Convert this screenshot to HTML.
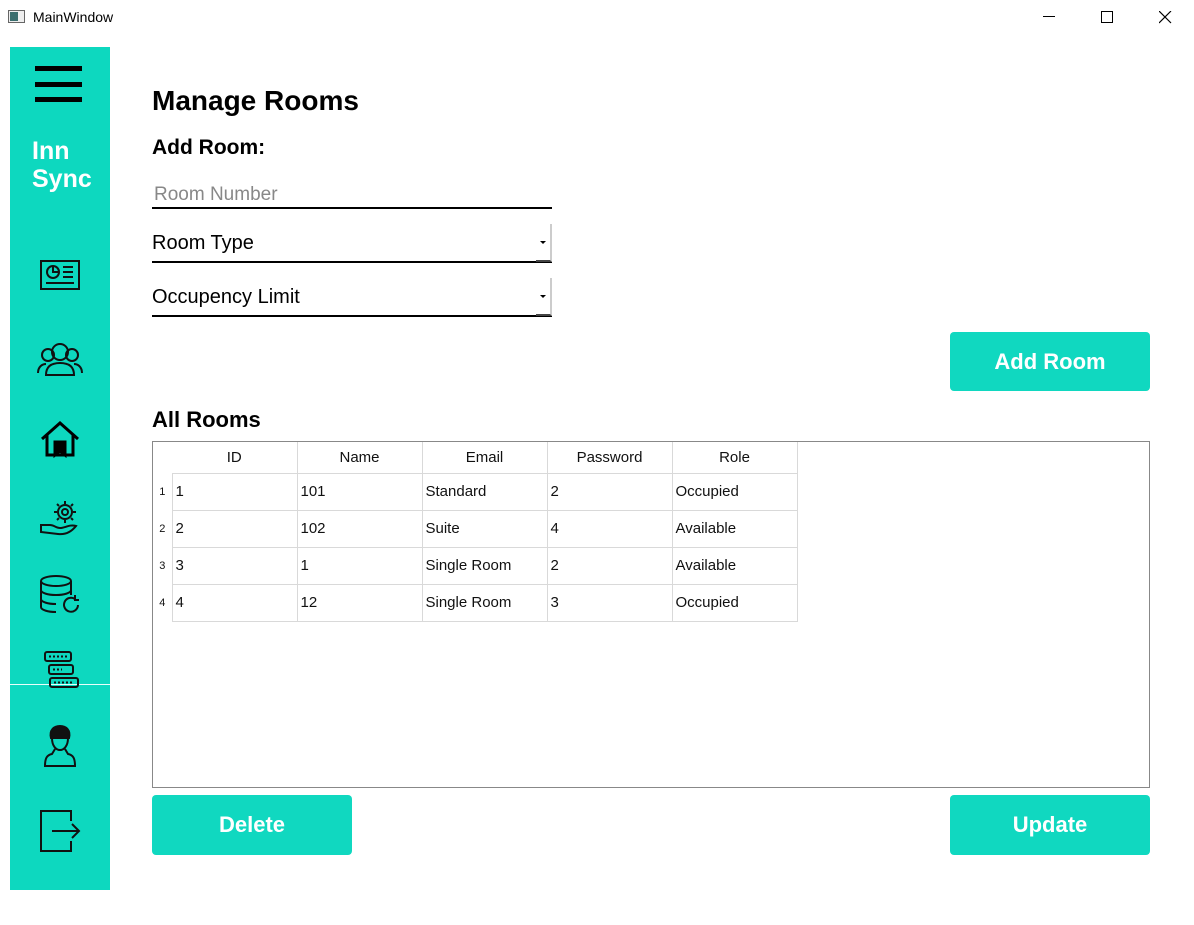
<!DOCTYPE html>
<html><head><meta charset="utf-8">
<style>
*{margin:0;padding:0;box-sizing:border-box}
body{width:1194px;height:925px;background:#fff;position:relative;overflow:hidden;font-family:"Liberation Sans",sans-serif}
.abs{position:absolute}
.side{left:10px;top:47px;width:100px;height:843px;background:#0dd8bf}
.btn{position:absolute;background:#10d8c0;border-radius:4px;color:#fff;font-weight:bold;font-size:22px;text-align:center}
.line{position:absolute;height:2px;background:#000}
table{border-collapse:collapse;table-layout:fixed;font-family:"Liberation Sans",sans-serif;color:#111}
td{border:1px solid #d9d9d9;height:37px;width:125px;padding-left:3px;font-size:15px;overflow:hidden;white-space:nowrap}
th{font-weight:normal;height:31px;width:125px;border-right:1px solid #d9d9d9;font-size:15px}
td.rh,th.rh{width:19px;border:none;font-size:11px;padding:0;text-align:center}
</style></head><body>
<svg class="abs" style="left:8px;top:10px" width="18" height="14"><rect x="0.5" y="0.5" width="16" height="12" fill="#eee" stroke="#666"/><rect x="2" y="2" width="8" height="9" fill="#3b6e6e"/></svg>
<div class="abs" style="left:33px;top:9px;font-size:14px;color:#000">MainWindow</div>
<div class="abs" style="left:1043px;top:16px;width:12px;height:1px;background:#000"></div>
<div class="abs" style="left:1101px;top:11px;width:12px;height:12px;border:1px solid #000"></div>
<svg class="abs" style="left:1159px;top:11px" width="13" height="13"><path d="M0 0L12 12M12 0L0 12" stroke="#000" stroke-width="1.2"/></svg>

<div class="abs side"></div>
<div class="abs" style="left:10px;top:684px;width:100px;height:1px;background:#e8fffb"></div>
<div class="abs" style="left:35px;top:66px;width:47px;height:5px;background:#000"></div>
<div class="abs" style="left:35px;top:82px;width:47px;height:5px;background:#000"></div>
<div class="abs" style="left:35px;top:97px;width:47px;height:5px;background:#000"></div>
<div class="abs" style="left:32px;top:137px;color:#fff;font-weight:bold;font-size:25px;line-height:28px;font-family:'Liberation Sans',sans-serif">Inn<br>Sync</div>
<svg class="abs" style="left:38px;top:258px" width="44" height="36" fill="none" stroke="#111" stroke-width="2"><rect x="3" y="3" width="38" height="28"/><circle cx="15" cy="14" r="6"/><path d="M15 8V14H21M25 9H35M25 14H35M25 19H35M8 25H36"/></svg>
<svg class="abs" style="left:36px;top:337px" width="48" height="40" fill="none" stroke="#111" stroke-width="2"><circle cx="24" cy="15" r="8"/><circle cx="12" cy="18" r="6"/><circle cx="36" cy="18" r="6"/><path d="M10 38C10 29 16 26 24 26S38 29 38 38ZM2 36C2 30 6 27 10 27M46 36C46 30 42 27 38 27"/></svg>
<svg class="abs" style="left:40px;top:420px" width="40" height="38" fill="none" stroke="#000" stroke-width="3"><path d="M2 19L20 3L38 19M7 15V35H33V15"/><path d="M15 22H25V35L20 31L15 35Z" fill="#000"/></svg>
<svg class="abs" style="left:38px;top:498px" width="42" height="40" fill="none" stroke="#111" stroke-width="2"><circle cx="27" cy="14" r="7"/><circle cx="27" cy="14" r="3"/><path d="M27 3V6M27 22V25M16 14H19M35 14H38M19 6L21 8M33 20L35 22M35 6L33 8M21 20L19 22"/><path d="M3 27H12C16 27 18 30 22 30C27 30 32 26 38 28C34 33 28 37 20 36L3 34Z"/></svg>
<svg class="abs" style="left:38px;top:573px" width="44" height="42" fill="none" stroke="#111" stroke-width="2"><ellipse cx="18" cy="8" rx="15" ry="5"/><path d="M3 8V34C3 37 10 39 18 39M33 8V22M3 17C3 20 10 22 18 22S33 20 33 17M3 26C3 29 10 31 18 31"/><path d="M40 32A7 7 0 1 1 37 26M37 22V27H41"/></svg>
<svg class="abs" style="left:40px;top:650px" width="40" height="40" fill="none" stroke="#111" stroke-width="2"><rect x="5" y="2" width="26" height="9" rx="2"/><rect x="9" y="15" width="24" height="9" rx="2"/><rect x="10" y="28" width="28" height="9" rx="2"/><path d="M9 6.5H27M13 19.5H22M14 32.5H33" stroke-dasharray="2 2"/></svg>
<svg class="abs" style="left:42px;top:724px" width="36" height="44" fill="none" stroke="#111" stroke-width="2"><path d="M9 14C7 6 12 2 18 2S29 6 27 14Z" fill="#111"/><path d="M10 14C10 22 14 26 18 26S26 22 26 14M13 25L10 30C5 31 3 34 3 42H33C33 34 31 31 26 30L23 25"/></svg>
<svg class="abs" style="left:38px;top:808px" width="44" height="46" fill="none" stroke="#111" stroke-width="2"><path d="M33 13V3H3V43H33V33M14 23H41M34 16L41 23L34 30"/></svg>

<div class="abs" style="left:152px;top:85px;font-size:28px;font-weight:bold">Manage Rooms</div>
<div class="abs" style="left:152px;top:136px;font-size:21px;font-weight:bold">Add Room:</div>
<div class="abs" style="left:154px;top:184px;font-size:19px;color:#888">Room Number</div>
<div class="line" style="left:152px;top:207px;width:400px"></div>
<div class="abs" style="left:152px;top:232px;font-size:20px">Room Type</div>
<div class="line" style="left:152px;top:261px;width:400px"></div>
<div class="abs" style="left:536px;top:224px;width:16px;height:38px;border-right:2px solid #ccc;border-bottom:2px solid #444"></div>
<div class="abs" style="left:540px;top:241px;width:0;height:0;border-left:3px solid transparent;border-right:3px solid transparent;border-top:3px solid #000"></div>
<div class="abs" style="left:152px;top:286px;font-size:20px">Occupency Limit</div>
<div class="line" style="left:152px;top:315px;width:400px"></div>
<div class="abs" style="left:536px;top:278px;width:16px;height:38px;border-right:2px solid #ccc;border-bottom:2px solid #444"></div>
<div class="abs" style="left:540px;top:295px;width:0;height:0;border-left:3px solid transparent;border-right:3px solid transparent;border-top:3px solid #000"></div>

<div class="btn" style="left:950px;top:332px;width:200px;height:59px;line-height:59px">Add Room</div>
<div class="abs" style="left:152px;top:407px;font-size:22px;font-weight:bold">All Rooms</div>

<div class="abs" style="left:152px;top:441px;width:998px;height:347px;border:1px solid #888">
<table style="width:644px">
<colgroup><col style="width:19px"><col style="width:125px"><col style="width:125px"><col style="width:125px"><col style="width:125px"><col style="width:125px"></colgroup>
<tr><th class="rh"></th><th>ID</th><th>Name</th><th>Email</th><th>Password</th><th>Role</th></tr>
<tr><td class="rh">1</td><td>1</td><td>101</td><td>Standard</td><td>2</td><td>Occupied</td></tr>
<tr><td class="rh">2</td><td>2</td><td>102</td><td>Suite</td><td>4</td><td>Available</td></tr>
<tr><td class="rh">3</td><td>3</td><td>1</td><td>Single Room</td><td>2</td><td>Available</td></tr>
<tr><td class="rh">4</td><td>4</td><td>12</td><td>Single Room</td><td>3</td><td>Occupied</td></tr>
</table>
</div>
<div class="abs" style="left:153px;top:684px;width:996px;height:1px;background:#fff"></div>

<div class="btn" style="left:152px;top:795px;width:200px;height:60px;line-height:60px">Delete</div>
<div class="btn" style="left:950px;top:795px;width:200px;height:60px;line-height:60px">Update</div>
</body></html>
